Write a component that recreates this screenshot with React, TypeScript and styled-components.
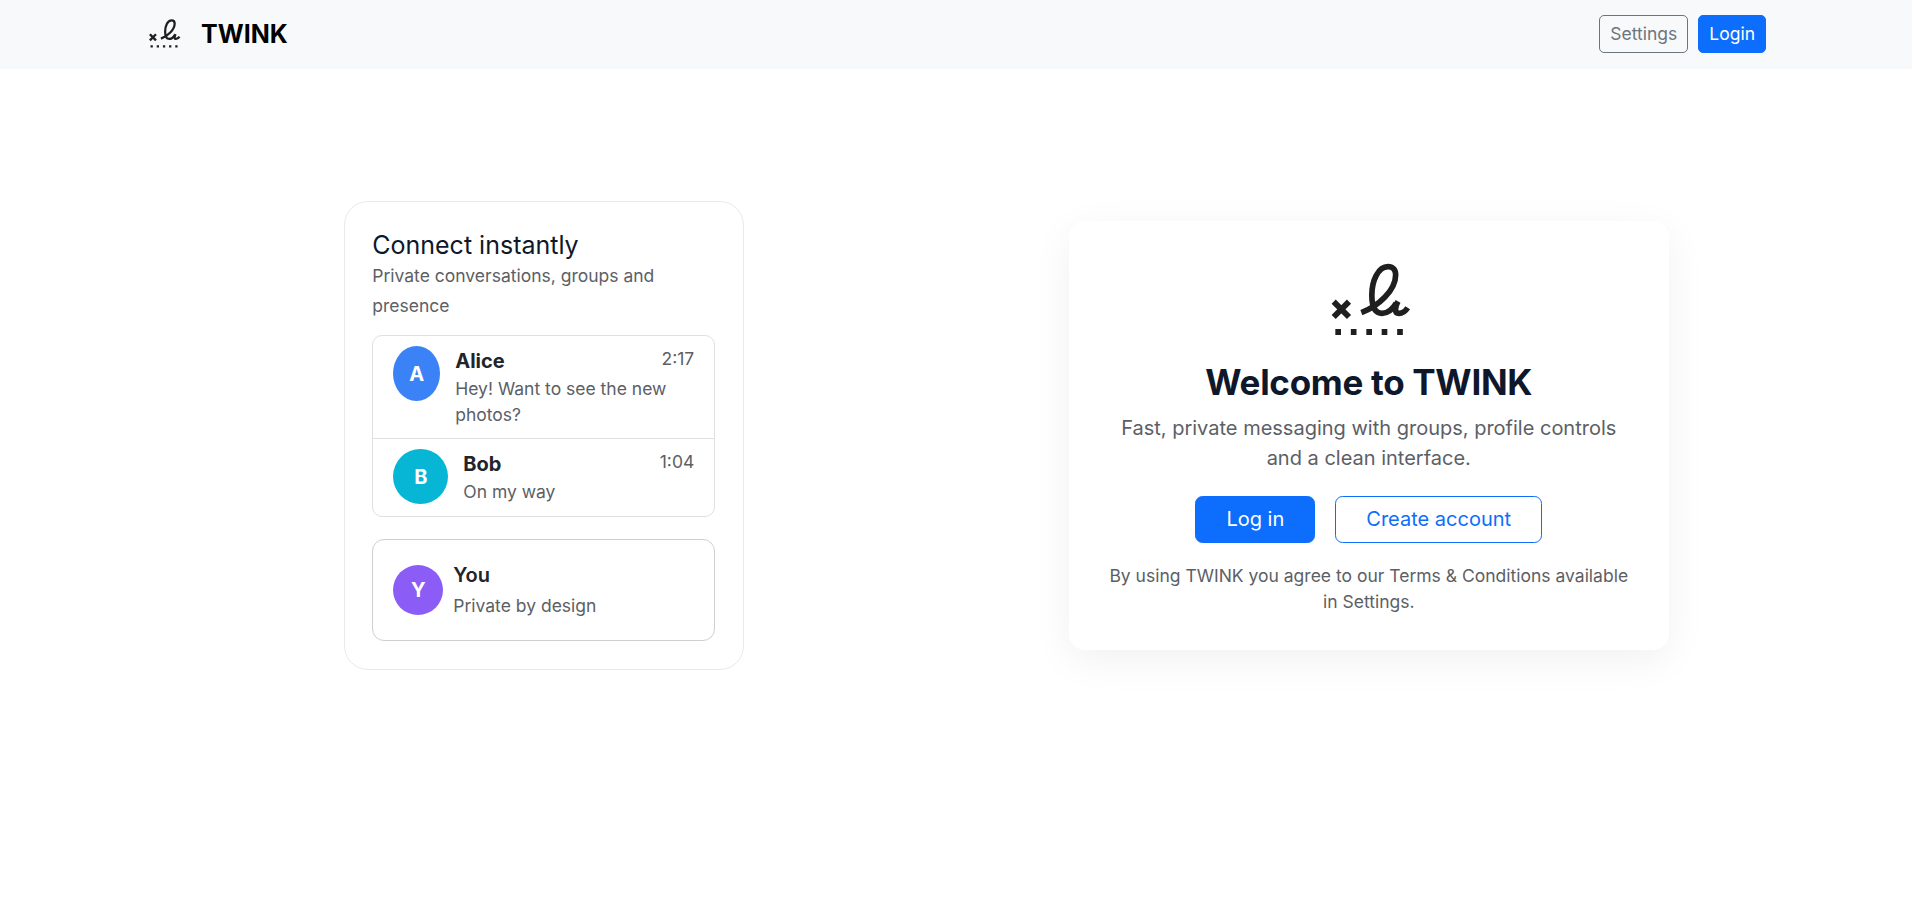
import React from "react";
import styled, { createGlobalStyle } from "styled-components";

const GlobalStyle = createGlobalStyle`
  *, *::before, *::after { box-sizing: border-box; }
  html { font-size: 20px; }
  body {
    margin: 0;
    background: #fff;
    color: #212529;
    font-family: Inter, "Liberation Sans", sans-serif;
    font-size: 1rem;
    line-height: 1.5;
  }
  h1, h2, p { margin: 0; }
`;

const Header = styled.header`
  height: 69px;
  background: #f8f9fb;
`;

const HeaderInner = styled.div`
  width: 1620px;
  height: 100%;
  margin: 0 auto;
  display: flex;
  align-items: center;
  justify-content: space-between;
`;

const Brand = styled.div`
  margin-top: -1px;
  display: flex;
  align-items: center;
  gap: 19px;
  color: #000;
  font-size: 25px;
  font-weight: 700;
  line-height: 34px;
`;

const BrandName = styled.span`
  padding-bottom: 1px;
`;

const Actions = styled.div`
  display: flex;
  gap: 10px;
  margin-top: -1px;
`;

type ButtonKind = "primary" | "outline" | "muted";
const palette: Record<ButtonKind, { bg: string; fg: string; line: string }> = {
  primary: { bg: "#0d6efd", fg: "#fff", line: "#0d6efd" },
  outline: { bg: "transparent", fg: "#0d6efd", line: "#0d6efd" },
  muted: { bg: "transparent", fg: "#6c757d", line: "#6c757d" },
};

const Button = styled.button<{ $kind: ButtonKind; $small?: boolean }>`
  margin: 0;
  padding: ${(p) => (p.$small ? "5px 10px" : "7px 30px 8px")};
  border: 1px solid ${(p) => palette[p.$kind].line};
  border-radius: ${(p) => (p.$small ? "5px" : "7.5px")};
  background: ${(p) => palette[p.$kind].bg};
  color: ${(p) => palette[p.$kind].fg};
  font-family: inherit;
  font-size: ${(p) => (p.$small ? "17.5px" : "20px")};
  line-height: ${(p) => (p.$small ? "26px" : "30px")};
`;

const Main = styled.main`
  width: 1651px;
  height: 733px;
  margin: 0 auto;
  display: grid;
  grid-template-columns: 1fr 1fr;
  align-items: center;
  justify-items: center;
`;

const Preview = styled.section`
  width: 400px;
  margin-left: 2px;
  padding: 28px 28px 28px 27px;
  border: 1px solid #e9e9eb;
  border-radius: 24px;
`;

const PreviewTitle = styled.h2`
  color: #0f172a;
  font-size: 25px;
  font-weight: 400;
  line-height: 30px;
`;

const Small = styled.small`
  color: #5c6065;
  font-size: 17.5px;
`;

const Muted = styled.p`
  color: #5c6065;
  font-size: 17.5px;
  line-height: 26px;
`;

const ChatList = styled.div`
  margin: 15px 0 22.25px;
  border: 1px solid #dee0e2;
  border-radius: 10px;
`;

const Chat = styled.div`
  display: flex;
  align-items: flex-start;
  padding: 10px 20px;
  & + & {
    padding-bottom: 10.5px;
    border-top: 1px solid #dee0e2;
  }
`;

const Avatar = styled.div<{ $color: string; $w: number; $h: number }>`
  flex: none;
  width: ${(p) => p.$w}px;
  height: ${(p) => p.$h}px;
  border-radius: 50%;
  background: ${(p) => p.$color};
  color: #fff;
  font-weight: 700;
  display: flex;
  align-items: center;
  justify-content: center;
`;

const ChatBody = styled.div`
  flex: 1;
  margin-left: 15px;
`;

const ChatTop = styled.div`
  display: flex;
  align-items: flex-start;
  justify-content: space-between;
`;

const Name = styled.div<{ $weight: number }>`
  font-weight: ${(p) => p.$weight};
  line-height: 30px;
`;

const Time = styled.time`
  color: #5c6065;
  font-size: 17.5px;
  line-height: 26px;
`;

const Self = styled.div`
  display: flex;
  align-items: center;
  gap: 10px;
  padding: 20px;
  border: 1px solid #cdcfd2;
  border-radius: 12px;
`;

const Welcome = styled.section`
  width: 600px;
  height: 429px;
  padding: 35px 32px 0;
  border-radius: 16px;
  background: #fff;
  box-shadow: 0 10px 40px rgba(0, 0, 0, 0.06);
  text-align: center;
  display: flex;
  flex-direction: column;
  align-items: center;
`;

const WelcomeTitle = styled.h1`
  margin-top: 14px;
  color: #0f172a;
  font-size: 35px;
  font-weight: 700;
  letter-spacing: -0.3px;
  line-height: 44px;
`;

const Lead = styled.p`
  width: 510px;
  margin-top: 9px;
  color: #5c6065;
  line-height: 30px;
`;

const Buttons = styled.div`
  display: flex;
  gap: 20px;
  margin: 23px 0 20px;
`;

const Mark = styled.svg`
  display: block;
  flex: none;
`;

function Logo({ size }: { size: number }) {
  return (
    <Mark width={size} height={size} viewBox="42 33 270 270" fill="none" stroke="#1f1f1f">
      <path d="M71 170 L117 216 M117 170 L71 216" strokeWidth="17.5" />
      <path
        d="M154 203 C204 184 257 137 257 89 C257 74 248 65 234 65 C205 65 185.500 106 185.500 151 C185.500 186 194 205 216 205 C233 205 247 194 259 174"
        strokeWidth="17"
      />
      <path d="M264 169 C254 187 253 205 267 205 C277 205 286 199 293 188" strokeWidth="17" />
      <path d="M76 252h17v18h-17z M122.500 252h17v18h-17z M169 252h17v18h-17z M215 252h17v18h-17z M261.500 252h17v18h-17z" fill="#1f1f1f" stroke="none" />
    </Mark>
  );
}

const chats = [
  { name: "Alice", initial: "A", color: "#3b82f6", width: 47, time: "2:17", text: "Hey! Want to see the new photos?" },
  { name: "Bob", initial: "B", color: "#06b6d4", width: 55, time: "1:04", text: "On my way" },
];

export default function App() {
  return (
    <>
      <GlobalStyle />
      <Header>
        <HeaderInner>
          <Brand>
            <Logo size={36} />
            <BrandName>TWINK</BrandName>
          </Brand>
          <Actions>
            <Button $kind="muted" $small>Settings</Button>
            <Button $kind="primary" $small>Login</Button>
          </Actions>
        </HeaderInner>
      </Header>
      <Main>
        <Preview>
          <PreviewTitle>Connect instantly</PreviewTitle>
          <div>
            <Small>Private conversations, groups and presence</Small>
          </div>
          <ChatList>
            {chats.map((c) => (
              <Chat key={c.name}>
                <Avatar $color={c.color} $w={c.width} $h={55}>{c.initial}</Avatar>
                <ChatBody>
                  <ChatTop>
                    <Name $weight={700}>{c.name}</Name>
                    <Time>{c.time}</Time>
                  </ChatTop>
                  <Muted>{c.text}</Muted>
                </ChatBody>
              </Chat>
            ))}
          </ChatList>
          <Self>
            <Avatar $color="#8b5cf6" $w={50} $h={50}>Y</Avatar>
            <div>
              <Name $weight={600}>You</Name>
              <div>
                <Small>Private by design</Small>
              </div>
            </div>
          </Self>
        </Preview>
        <Welcome>
          <Logo size={90} />
          <WelcomeTitle>Welcome to TWINK</WelcomeTitle>
          <Lead>Fast, private messaging with groups, profile controls and a clean interface.</Lead>
          <Buttons>
            <Button $kind="primary">Log in</Button>
            <Button $kind="outline">Create account</Button>
          </Buttons>
          <Muted>By using TWINK you agree to our Terms &amp; Conditions available in Settings.</Muted>
        </Welcome>
      </Main>
    </>
  );
}
